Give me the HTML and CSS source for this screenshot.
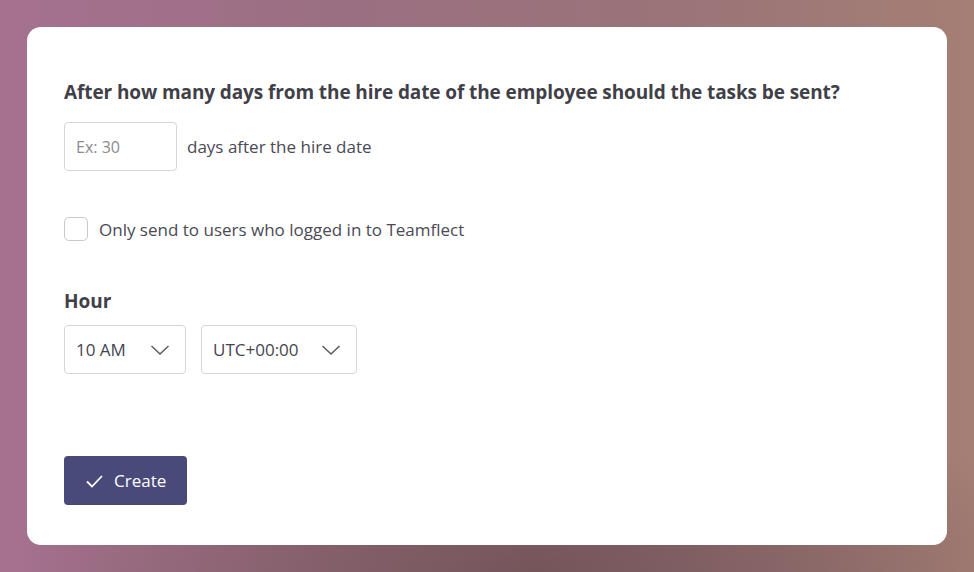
FILE: index.html
```html
<!DOCTYPE html>
<html>
<head>
<meta charset="utf-8">
<link rel="stylesheet" href="styles.css">
</head>
<body>
<div class="card">
  <h2 class="question">After how many days from the hire date of the employee should the tasks be sent?</h2>
  <div class="days-row">
    <div class="input">Ex: 30</div>
    <span class="days-label">days after the hire date</span>
  </div>
  <label class="check-row">
    <span class="checkbox"></span>
    <span class="check-label">Only send to users who logged in to Teamflect</span>
  </label>
  <div class="hour-title">Hour</div>
  <div class="selects">
    <div class="select s-hour"><span>10 AM</span>
      <svg width="20" height="12" viewBox="0 0 20 12"><path d="M1.5 2 L10 10 L18.5 2" fill="none" stroke="#5a5a62" stroke-width="1.5"/></svg>
    </div>
    <div class="select s-tz"><span>UTC+00:00</span>
      <svg width="20" height="12" viewBox="0 0 20 12"><path d="M1.5 2 L10 10 L18.5 2" fill="none" stroke="#5a5a62" stroke-width="1.5"/></svg>
    </div>
  </div>
  <button class="create">
    <svg width="20" height="16" viewBox="0 0 20 16"><path d="M3 8.5 L8 13.5 L18 3" fill="none" stroke="#fff" stroke-width="1.8"/></svg>
    <span>Create</span>
  </button>
</div>
</body>
</html>
```
FILE: styles.css
```css
html, body { margin: 0; padding: 0; }
body {
  width: 974px; height: 572px; overflow: hidden;
  background:
    radial-gradient(ellipse 520px 200px at 55% 100%, rgba(112,82,86,0.9), rgba(112,82,86,0) 100%),
    linear-gradient(90deg, #a5718f 0%, #9b6f82 35%, #9a7478 70%, #a57f74 100%);
  font-family: "Open Sans", "Noto Sans", sans-serif;
  color: #424250;
  padding: 27px;
  box-sizing: border-box;
}
.card {
  background: #fff;
  border-radius: 14px;
  width: 920px;
  height: 518px;
  box-sizing: border-box;
  padding: 52px 37px 0 37px;
  display: flex;
  flex-direction: column;
  align-items: flex-start;
}
.question {
  margin: 0;
  font-size: 19px;
  font-weight: 700;
  line-height: 26px;
  letter-spacing: -0.1px;
  color: #3f4048;
}
.days-row {
  margin-top: 17px;
  display: flex;
  align-items: center;
  gap: 10px;
}
.input {
  width: 113px; height: 49px;
  box-sizing: border-box;
  border: 1px solid #d6d6d9;
  border-radius: 4px;
  padding-left: 11px;
  display: flex; align-items: center;
  font-size: 16px;
  color: #8a8a90;
}
.days-label { font-size: 17px; color: #4a4a55; }
.check-row {
  margin-top: 46px;
  display: flex;
  align-items: center;
  gap: 11px;
}
.checkbox {
  width: 24px; height: 24px;
  box-sizing: border-box;
  border: 1.5px solid #c8c8cc;
  border-radius: 5px;
}
.check-label { font-size: 17px; color: #4a4a55; }
.hour-title {
  margin-top: 48px;
  font-size: 19px;
  font-weight: 700;
  line-height: 24px;
  color: #3f4048;
}
.selects {
  margin-top: 12px;
  display: flex;
  gap: 15px;
}
.select {
  height: 49px;
  box-sizing: border-box;
  border: 1px solid #d6d6d9;
  border-radius: 4px;
  padding: 0 15px 0 11px;
  display: flex; align-items: center; justify-content: space-between;
  font-size: 17px;
  color: #45454f;
}
.s-hour { width: 122px; }
.s-tz { width: 156px; }
.create {
  margin-top: 82px;
  width: 123px; height: 49px;
  border: none;
  border-radius: 4px;
  background: #4a4a7a;
  color: #fff;
  font-family: inherit;
  font-size: 17px;
  display: flex; align-items: center;
  padding: 0 0 0 20px;
  gap: 10px;
}
```
